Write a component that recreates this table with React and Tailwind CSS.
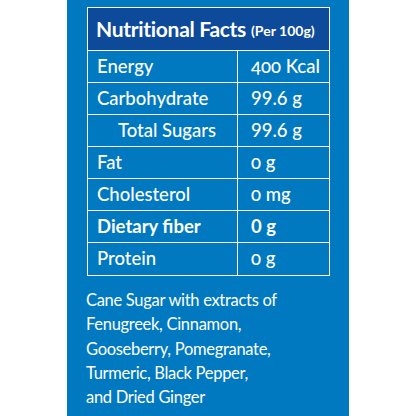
const rows = [
  { label: "Energy", value: "400 Kcal", old: true },
  { label: "Carbohydrate", value: "99.6 g" },
  { label: "Total Sugars", value: "99.6 g", indent: true },
  { label: "Fat", value: "0 g", old: true },
  { label: "Cholesterol", value: "0 mg", old: true },
  { label: "Dietary fiber", value: "0 g", bold: true },
  { label: "Protein", value: "0 g", old: true },
];

export default function App() {
  return (
    <div className="w-[416px] h-[416px] bg-white flex justify-center font-['Lato','Open_Sans',sans-serif]">
      <div className="w-[282px] h-full bg-[#0079c1] pt-[7px] px-[20px] text-white">
        <div className="border border-white w-[243px]">
          <div className="bg-[#0d4a9a] h-[43px] flex items-center pl-[8px] border-b border-white">
            <span className="text-[21px] font-bold tracking-[-0.3px]">Nutritional Facts</span>
            <span className="text-[14px] font-bold ml-[5px] mt-[3px]">(Per 100g)</span>
          </div>
          {rows.map((r, i) => (
            <div
              key={i}
              className="grid grid-cols-[150px_1fr] h-[32px] border-b border-white last:border-b-0"
            >
              <div
                className={
                  "flex items-center text-[18.5px] border-r border-white " +
                  (r.indent ? "pl-[30px] " : "pl-[9px] ") +
                  (r.bold ? "font-bold" : "font-medium")
                }
              >
                {r.label}
              </div>
              <div
                className={
                  "flex items-center pl-[13px] text-[18.5px] " +
                  (r.bold ? "font-bold " : "font-medium ") +
                  (r.old ? "[font-variant-numeric:oldstyle-nums]" : "")
                }
              >
                {r.value}
              </div>
            </div>
          ))}
        </div>
        <p className="mt-[12px] -ml-[1px] text-[16.5px] leading-[24.3px] tracking-[-0.3px]">
          Cane Sugar with extracts of
          <br />
          Fenugreek, Cinnamon,
          <br />
          Gooseberry, Pomegranate,
          <br />
          Turmeric, Black Pepper,
          <br />
          and Dried Ginger
        </p>
      </div>
    </div>
  );
}
